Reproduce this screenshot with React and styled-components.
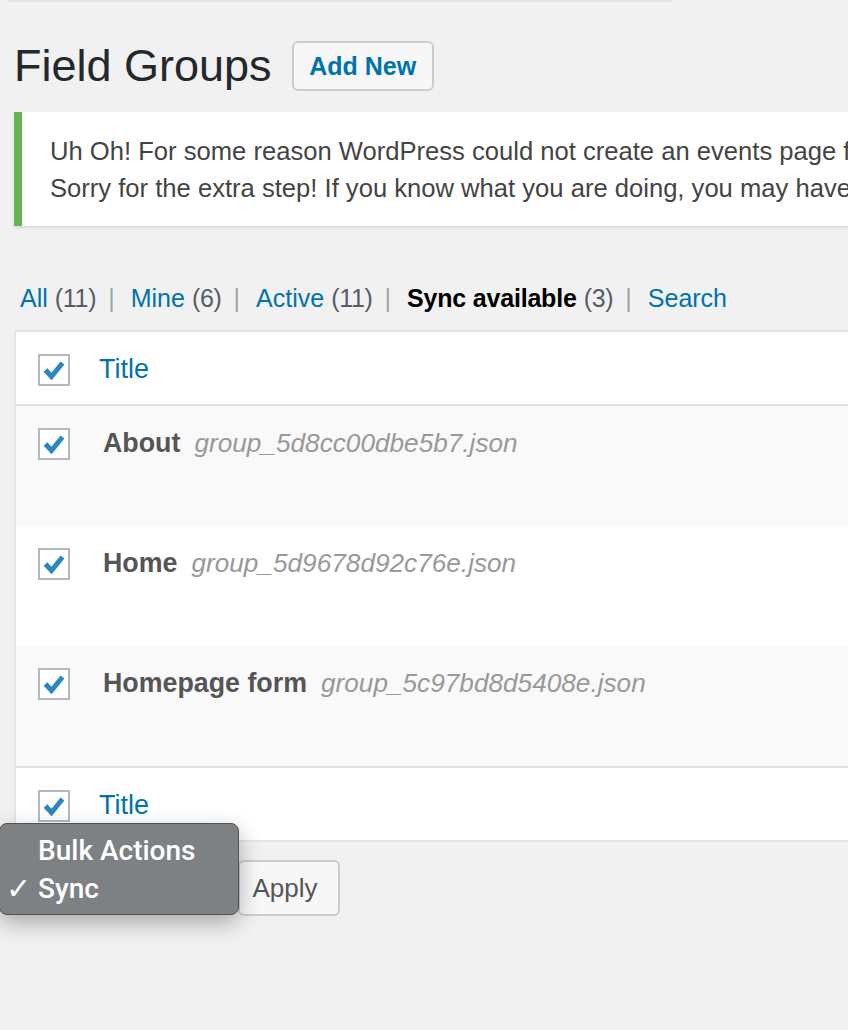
import React from 'react';
import styled, { createGlobalStyle } from 'styled-components';

const GlobalStyle = createGlobalStyle`
  html, body {
    margin: 0;
    padding: 0;
    background: #f1f1f1;
    overflow: hidden;
  }
  body {
    font-family: "Liberation Sans", Arial, sans-serif;
    color: #444;
  }
`;

const groups = [
  { name: 'About', file: 'group_5d8cc00dbe5b7.json' },
  { name: 'Home', file: 'group_5d9678d92c76e.json' },
  { name: 'Homepage form', file: 'group_5c97bd8d5408e.json' },
];

const filters = [
  { label: 'All', count: 11 },
  { label: 'Mine', count: 6 },
  { label: 'Active', count: 11 },
  { label: 'Sync available', count: 3, current: true },
  { label: 'Search' },
];

const Check = () => (
  <svg width="22" height="20" viewBox="0 0 22 20">
    <polyline
      points="2.5,10 8.5,16.5 19.5,3"
      fill="none"
      stroke="#2a87c1"
      strokeWidth="5"
      strokeLinejoin="miter"
    />
  </svg>
);

const Checkbox = () => (
  <Box>
    <Check />
  </Box>
);

const App = () => {
  return (
    <Page>
      <GlobalStyle />
      <TopEdge />
      <Wrap>
        <TitleBar>
          <h1>Field Groups</h1>
          <AddNew>Add New</AddNew>
        </TitleBar>

        <Notice>
          <p>Uh Oh! For some reason WordPress could not create an events page for you automatically.</p>
          <p>Sorry for the extra step! If you know what you are doing, you may have to create it yourself.</p>
        </Notice>

        <Filters>
          {filters.map((f, i) => (
            <li key={f.label}>
              <FilterLink $current={f.current}>{f.label}</FilterLink>
              {f.count !== undefined && <Count>({f.count})</Count>}
              {i < filters.length - 1 && <Sep>|</Sep>}
            </li>
          ))}
        </Filters>

        <Table>
          <HeadRow>
            <CheckCell>
              <Checkbox />
            </CheckCell>
            <HeadTitle>Title</HeadTitle>
          </HeadRow>
          {groups.map((g, i) => (
            <Row key={g.file} $striped={i % 2 === 0}>
              <CheckCell>
                <Checkbox />
              </CheckCell>
              <RowTitle>
                <strong>{g.name}</strong>
                <em>{g.file}</em>
              </RowTitle>
            </Row>
          ))}
          <FootRow>
            <CheckCell>
              <Checkbox />
            </CheckCell>
            <HeadTitle>Title</HeadTitle>
          </FootRow>
        </Table>

        <TableNav>
          <BulkSelect />
          <Apply>Apply</Apply>
          <Popup>
            <PopupItem>Bulk Actions</PopupItem>
            <PopupItem $checked>Sync</PopupItem>
          </Popup>
        </TableNav>
      </Wrap>
    </Page>
  );
};

const Page = styled.div`
  width: 848px;
  height: 1030px;
  overflow: hidden;
`;

const TopEdge = styled.div`
  margin-left: 8px;
  width: 664px;
  height: 2px;
  background: #e4e4e4;
`;

const Wrap = styled.div`
  padding-left: 14px;
  width: 1200px;
`;

const TitleBar = styled.div`
  display: flex;
  align-items: center;
  gap: 20px;
  margin-top: 39px;
  height: 50px;

  h1 {
    margin: 0;
    font-size: 45px;
    font-weight: 400;
    color: #23282d;
    line-height: 50px;
  }
`;

const AddNew = styled.button`
  box-sizing: border-box;
  height: 50px;
  width: 142px;
  padding: 0;
  border: 2px solid #ccc;
  border-radius: 6px;
  background: #f7f7f7;
  color: #0073aa;
  font-family: "Liberation Sans", Arial, sans-serif;
  font-size: 25px;
  font-weight: 700;
`;

const Notice = styled.div`
  margin-top: 21px;
  box-sizing: border-box;
  height: 114px;
  background: #fff;
  border-left: 8px solid #64b450;
  box-shadow: 0 2px 3px rgba(0, 0, 0, 0.1);
  padding: 21px 0 0 28px;

  p {
    margin: 0;
    font-size: 25.6px;
    line-height: 37px;
    color: #444;
    white-space: nowrap;
  }
`;

const Filters = styled.ul`
  display: flex;
  list-style: none;
  margin: 54px 0 0;
  padding: 0 0 0 6px;
  font-size: 25px;
  line-height: 36px;

  li {
    display: flex;
    white-space: pre;
  }
`;

const FilterLink = styled.span`
  color: ${p => (p.$current ? '#000' : '#0073aa')};
  font-weight: ${p => (p.$current ? 700 : 400)};
  letter-spacing: ${p => (p.$current ? '-0.2px' : '0')};
`;

const Count = styled.span`
  color: #555d66;
  margin-left: 7px;
  letter-spacing: -0.3px;
`;

const Sep = styled.span`
  color: #a0a5aa;
  margin: 0 16px 0 12px;
`;

const Table = styled.div`
  margin-top: 14px;
  border: 2px solid #e5e5e5;
  border-right: none;
  background: #fff;
`;

const HeadRow = styled.div`
  display: flex;
  height: 72px;
  border-bottom: 2px solid #e1e1e1;
  background: #fff;
`;

const FootRow = styled(HeadRow)`
  border-bottom: none;
  border-top: 2px solid #e1e1e1;
`;

const Row = styled.div`
  display: flex;
  height: 120px;
  background: ${p => (p.$striped ? '#f9f9f9' : '#fff')};
`;

const CheckCell = styled.div`
  width: 83px;
  padding: 22px 0 0 22px;
  box-sizing: border-box;
`;

const Box = styled.div`
  box-sizing: border-box;
  width: 32px;
  height: 32px;
  border: 2px solid #b4b9be;
  background: #fff;
  display: flex;
  align-items: center;
  justify-content: center;
`;

const HeadTitle = styled.div`
  padding-top: 17px;
  font-size: 27px;
  line-height: 40px;
  color: #0073aa;
`;

const RowTitle = styled.div`
  padding: 17px 0 0 4px;
  display: flex;
  align-items: baseline;
  gap: 14px;
  line-height: 40px;

  strong {
    font-size: 26.8px;
    font-weight: 700;
    color: #555;
  }

  em {
    font-size: 26.2px;
    color: #999;
  }
`;

const TableNav = styled.div`
  position: relative;
  display: flex;
  align-items: center;
  gap: 8px;
  padding: 18px 0 0 2px;
`;

const BulkSelect = styled.div`
  box-sizing: border-box;
  width: 214px;
  height: 54px;
  border: 2px solid #ddd;
  border-radius: 6px;
  background: #fff;
`;

const Apply = styled.button`
  box-sizing: border-box;
  width: 102px;
  height: 56px;
  padding: 0 8px 0 0;
  border: 2px solid #ccc;
  border-radius: 6px;
  background: #f7f7f7;
  color: #555;
  font-family: "Liberation Sans", Arial, sans-serif;
  font-size: 26px;
  text-align: center;
`;

const Popup = styled.div`
  position: absolute;
  left: -15px;
  top: -19px;
  width: 240px;
  height: 92px;
  box-sizing: border-box;
  padding-top: 8px;
  background: #7e8184;
  border: 1px solid #4f5153;
  border-radius: 8px;
  box-shadow: 0 8px 22px rgba(0, 0, 0, 0.3);
`;

const PopupItem = styled.div`
  position: relative;
  padding-left: 38px;
  height: 38px;
  line-height: 38px;
  color: #fff;
  font-family: Roboto, "Liberation Sans", sans-serif;
  font-size: 28px;
  font-weight: 500;

  &::before {
    content: ${p => (p.$checked ? '"✓"' : '""')};
    position: absolute;
    left: 6px;
    top: 0;
    font-family: "DejaVu Sans", sans-serif;
    font-size: 30px;
  }
`;

export default App;
